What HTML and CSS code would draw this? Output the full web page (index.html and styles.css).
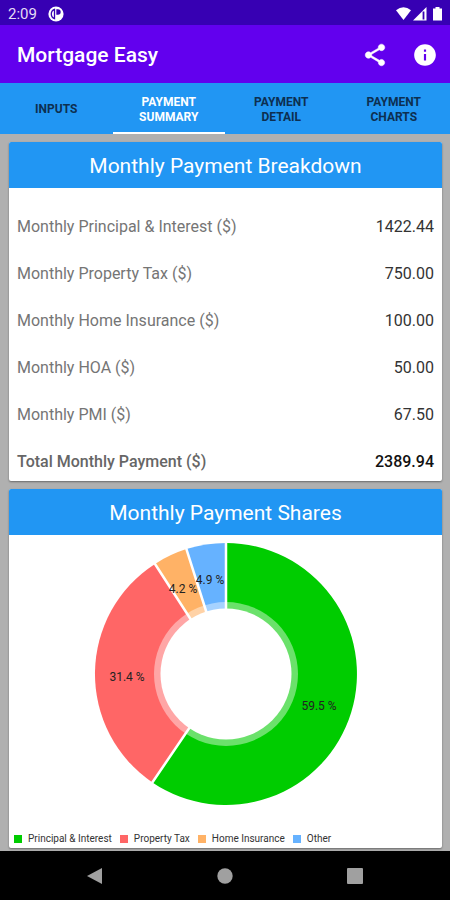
FILE: index.html
```html
<!DOCTYPE html>
<html lang="en">
<head>
<meta charset="utf-8">
<meta name="viewport" content="width=device-width, initial-scale=1">
<title>Mortgage Easy</title>
<link rel="stylesheet" href="styles.css">
</head>
<body>
<div class="status">
  <span class="clock">2:09</span>
  <svg width="16" height="16" viewBox="0 0 16 16" aria-hidden="true"><circle cx="8" cy="8" r="7.6" fill="#fff"/><path d="M6.500 3.400a4.900 4.900 0 0 0 0 9.200z" fill="none" stroke="#3700b3" stroke-width="1.300"/><path d="M8.300 3.200h1.600a2.800 2.800 0 0 1 0 5.600H8.300z" fill="#3700b3"/></svg>
  <svg class="signals" width="48" height="16" viewBox="0 0 48 16" aria-hidden="true">
    <path d="M1 4.300Q8.500 -1.800 16 4.300L8.500 14z" fill="#fff"/>
    <path d="M18 14.500L31.500 1v13.500z" fill="#fff"/><path d="M28.500 5.500v8" stroke="#3700b3" stroke-width="1.800"/>
    <path d="M38 2.500h2.500V1h4v1.500H47v12h-9z" fill="#fff"/>
  </svg>
</div>
<header class="appbar">
  <h1>Mortgage Easy</h1>
  <button type="button" aria-label="Share"><svg width="26" height="26" viewBox="0 0 24 24"><path fill="#fff" stroke="#fff" stroke-width=".5" d="M18 16.080c-.76 0-1.440.3-1.960.77L8.910 12.700c.05-.23.09-.46.09-.7s-.04-.47-.09-.7l7.050-4.110c.54.5 1.250.81 2.040.81 1.660 0 3-1.340 3-3s-1.340-3-3-3-3 1.340-3 3c0 .24.04.47.09.7L8.040 9.810C7.500 9.310 6.790 9 6 9c-1.660 0-3 1.340-3 3s1.340 3 3 3c.79 0 1.500-.31 2.040-.81l7.120 4.160c-.05.21-.08.43-.08.65 0 1.610 1.310 2.920 2.920 2.920s2.920-1.310 2.920-2.920-1.310-2.920-2.920-2.920z"/></svg></button>
  <button type="button" aria-label="Information"><svg width="26" height="26" viewBox="0 0 24 24"><path fill="#fff" d="M12 2C6.480 2 2 6.480 2 12s4.480 10 10 10 10-4.480 10-10S17.520 2 12 2zm1 15h-2v-6h2v6zm0-8h-2V7h2v2z"/></svg></button>
</header>
<nav class="tabs" aria-label="Sections">
  <button type="button">INPUTS</button>
  <button type="button" class="active">PAYMENT<br>SUMMARY</button>
  <button type="button">PAYMENT<br>DETAIL</button>
  <button type="button">PAYMENT<br>CHARTS</button>
</nav>
<main>
  <section class="card">
    <h2>Monthly Payment Breakdown</h2>
    <table>
      <tbody>
        <tr><th scope="row">Monthly Principal &amp; Interest ($)</th><td>1422.44</td></tr>
        <tr><th scope="row">Monthly Property Tax ($)</th><td>750.00</td></tr>
        <tr><th scope="row">Monthly Home Insurance ($)</th><td>100.00</td></tr>
        <tr><th scope="row">Monthly HOA ($)</th><td>50.00</td></tr>
        <tr><th scope="row">Monthly PMI ($)</th><td>67.50</td></tr>
        <tr class="total"><th scope="row">Total Monthly Payment ($)</th><td>2389.94</td></tr>
      </tbody>
    </table>
  </section>
  <section class="card">
    <h2>Monthly Payment Shares</h2>
    <svg class="pie" width="280" height="280" viewBox="-140 -139 280 280" role="img" aria-label="Monthly payment shares">
      <path fill="#00cc00" d="M0 0V-131A131 131 0 1 1 -73.600 108.400z"/>
      <path fill="#ff6666" d="M0 0L-73.600 108.400A131 131 0 0 1 -71 -110.100z"/>
      <path fill="#ffb266" d="M0 0L-71 -110.100A131 131 0 0 1 -39.600 -124.900z"/>
      <path fill="#66b2ff" d="M0 0L-39.600 -124.900A131 131 0 0 1 0 -131z"/>
      <circle r="72" fill="#fff" fill-opacity=".42"/>
      <path d="M0 0V-133M0 0L-74.700 110M0 0L-72.100 -111.800M0 0L-40.200 -126.800" stroke="#fff" stroke-width="2.500"/>
      <circle r="65.500" fill="#fff"/>
      <g class="shares">
        <text x="93" y="36">59.5 %</text>
        <text x="-99" y="7">31.4 %</text>
        <text x="-43" y="-81">4.2 %</text>
        <text x="-16" y="-90">4.9 %</text>
      </g>
    </svg>
    <ul class="legend">
      <li class="green">Principal &amp; Interest</li>
      <li class="red">Property Tax</li>
      <li class="orange">Home Insurance</li>
      <li class="blue">Other</li>
    </ul>
  </section>
</main>
<footer class="sysnav">
  <button type="button" aria-label="Back"><svg width="18" height="18" viewBox="0 0 18 18"><path d="M1 9L16 1v16z" fill="#a0a0a0"/></svg></button>
  <button type="button" aria-label="Home"><svg width="18" height="18" viewBox="0 0 18 18"><circle cx="9" cy="9" r="7.700" fill="#a0a0a0"/></svg></button>
  <button type="button" aria-label="Recent apps"><svg width="18" height="18" viewBox="0 0 18 18"><rect x="1" y="1" width="16" height="16" rx="1" fill="#a0a0a0"/></svg></button>
</footer>
</body>
</html>
```
FILE: styles.css
```css
* { box-sizing: border-box; }
body {
  margin: 0;
  min-height: 100vh;
  display: flex;
  flex-direction: column;
  background: #b0b0b0;
  font-family: Roboto, "Liberation Sans", sans-serif;
}
button {
  margin: 0;
  padding: 0;
  border: 0;
  background: none;
  font: inherit;
}
svg { display: block; }
.status {
  display: flex;
  align-items: center;
  gap: 11px;
  height: 25px;
  padding: 2px 7px 0 8px;
  background: #3700b3;
  color: #e4dcf5;
  font-size: 15px;
}
.signals { margin-left: auto; }
.appbar {
  display: flex;
  align-items: center;
  gap: 24px;
  height: 58px;
  padding: 2px 12px 0 17px;
  background: #6200ee;
  color: #fff;
}
h1 {
  flex: 1;
  margin: 0;
  font-size: 21px;
  line-height: 28px;
  font-weight: 500;
}
.tabs {
  display: grid;
  grid-template-columns: repeat(4, 1fr);
  height: 51px;
  background: #2196f3;
}
.tabs button {
  padding-top: 4px;
  border-bottom: 2px solid transparent;
  color: #0d2f50;
  font-size: 12px;
  line-height: 15px;
  font-weight: 700;
}
.tabs .active {
  border-color: #fff;
  color: #fff;
}
main {
  flex: 1;
  display: flex;
  flex-direction: column;
  gap: 8px;
  padding: 8px 8px 3px 9px;
}
.card {
  overflow: hidden;
  border-radius: 2px;
  background: #fff;
  box-shadow: 0 1px 2px #0006;
}
h2 {
  margin: 0;
  height: 46px;
  background: #2196f3;
  color: #fff;
  font-size: 21px;
  line-height: 49px;
  font-weight: 400;
  text-align: center;
}
table {
  width: 100%;
  border-spacing: 0;
  margin-top: 15px;
  padding: 0 8px;
  font-size: 16px;
  line-height: 19px;
}
th, td { padding: 14px 0; }
th {
  color: #757575;
  font-weight: 400;
  text-align: left;
}
td {
  color: #333;
  text-align: right;
}
.total th, .total td {
  padding-bottom: 10px;
  font-weight: 500;
}
.total th { color: #666; }
.total td { color: #111; }
.pie {
  margin: 0 auto;
}
.shares {
  fill: #222;
  font-size: 12px;
  text-anchor: middle;
}
.legend {
  display: flex;
  gap: 8px;
  margin: 0;
  padding: 18px 5px 3px;
  list-style: none;
  color: #333;
  font-size: 10px;
  line-height: 12px;
}
.legend li {
  display: flex;
  align-items: center;
  gap: 6px;
  white-space: nowrap;
}
.legend li::before {
  content: "";
  width: 8px;
  height: 8px;
  background: currentColor;
}
.legend .green::before { background: #00cc00; }
.legend .red::before { background: #ff6666; }
.legend .orange::before { background: #ffb266; }
.legend .blue::before { background: #66b2ff; }
.sysnav {
  display: flex;
  justify-content: center;
  align-items: center;
  gap: 112px;
  height: 49px;
  background: #000;
}
```
